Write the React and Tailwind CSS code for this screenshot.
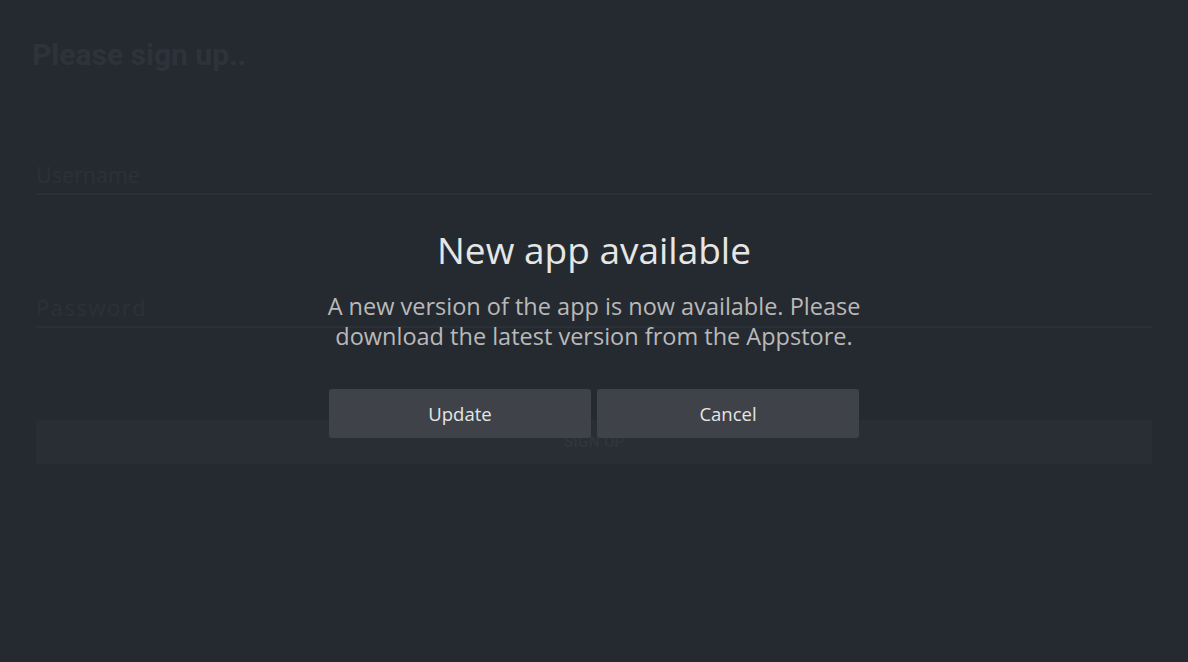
import React from 'react';

const SignUpForm = () => (
    <div className="px-[36px] pt-[32px]">
        <h1
            className="text-[30px] font-bold text-[#2e333b] -ml-[4px]"
            style={{ fontFamily: 'Roboto, sans-serif' }}
        >
            Please sign up..
        </h1>
        <div className="mt-[82px] border-b-2 border-[#2b3038] pb-[2px]">
            <span className="text-[21.5px] text-[#2c3139]" style={{ fontFamily: '"Open Sans", sans-serif' }}>
                Username
            </span>
        </div>
        <div className="mt-[96px] border-b-2 border-[#2b3038] pb-[2px]">
            <span
                className="text-[22px] text-[#2c3139] tracking-[1.5px]"
                style={{ fontFamily: '"Open Sans", sans-serif' }}
            >
                Password
            </span>
        </div>
        <button
            className="mt-[92px] w-full h-[44px] rounded-[3px] bg-[#292e35] text-[16px] font-medium text-[#30353c]"
            style={{ fontFamily: 'Roboto, sans-serif' }}
        >
            SIGN UP
        </button>
    </div>
);

const UpdateDialog = () => (
    <div className="absolute inset-0 flex justify-center" style={{ fontFamily: '"Open Sans", sans-serif' }}>
        <div className="w-[530px] pt-[225px] flex flex-col items-center">
            <h2 className="text-[37px] leading-[50px] text-[#e6e6e6]">New app available</h2>
            <p className="mt-[16px] w-[560px] text-[23.5px] leading-[30px] text-[#b9b9b9] text-center">
                A new version of the app is now available. Please download the latest version from the Appstore.
            </p>
            <div className="mt-[38px] w-full grid grid-cols-2 gap-[6px]">
                <button className="h-[49px] rounded-[3px] bg-[#3f4349] text-[18.5px] text-[#e6e6e6]">Update</button>
                <button className="h-[49px] rounded-[3px] bg-[#3f4349] text-[18.5px] text-[#e6e6e6]">Cancel</button>
            </div>
        </div>
    </div>
);

export default function App() {
    return (
        <div className="relative w-full h-[662px] bg-[#252a31] overflow-hidden">
            <SignUpForm />
            <UpdateDialog />
        </div>
    );
}
